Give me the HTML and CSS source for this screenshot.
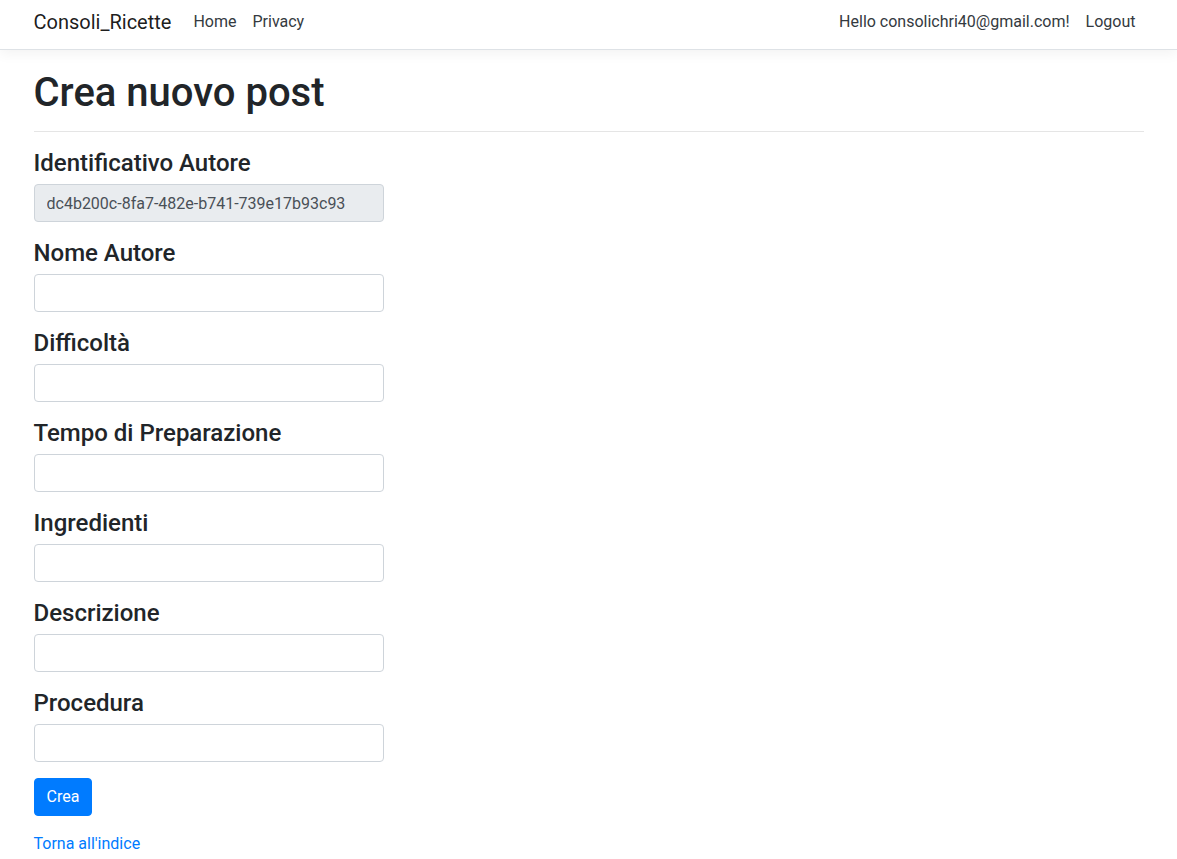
FILE: index.html
```html
<!DOCTYPE html>
<html lang="it">
<head>
<meta charset="utf-8">
<title>Crea nuovo post - Consoli_Ricette</title>
<link rel="stylesheet" href="styles.css">
</head>
<body>
<header class="navbar">
  <div class="container nav-inner">
    <a class="brand" href="#">Consoli_Ricette</a>
    <ul class="nav-left">
      <li><a class="nav-link" href="#">Home</a></li>
      <li><a class="nav-link" href="#">Privacy</a></li>
    </ul>
    <ul class="nav-right">
      <li><a class="nav-link" href="#">Hello consolichri40@gmail.com!</a></li>
      <li><button class="nav-link nav-btn" type="button">Logout</button></li>
    </ul>
  </div>
</header>
<main class="container main">
  <h1 class="title">Crea nuovo post</h1>
  <hr class="rule">
  <div class="row">
    <form class="col">
      <div class="form-group">
        <label class="label">Identificativo Autore</label>
        <input class="form-control" type="text" value="dc4b200c-8fa7-482e-b741-739e17b93c93" readonly>
      </div>
      <div class="form-group">
        <label class="label">Nome Autore</label>
        <input class="form-control" type="text">
      </div>
      <div class="form-group">
        <label class="label">Difficoltà</label>
        <input class="form-control" type="text">
      </div>
      <div class="form-group">
        <label class="label">Tempo di Preparazione</label>
        <input class="form-control" type="text">
      </div>
      <div class="form-group">
        <label class="label">Ingredienti</label>
        <input class="form-control" type="text">
      </div>
      <div class="form-group">
        <label class="label">Descrizione</label>
        <input class="form-control" type="text">
      </div>
      <div class="form-group">
        <label class="label">Procedura</label>
        <input class="form-control" type="text">
      </div>
      <div class="form-group">
        <button class="btn-primary" type="button">Crea</button>
      </div>
    </form>
  </div>
  <div class="back">
    <a class="link" href="#">Torna all'indice</a>
  </div>
</main>
</body>
</html>
```
FILE: styles.css
```css
* { box-sizing: border-box; }
html, body { margin: 0; padding: 0; }
body {
  font-family: Roboto, "Open Sans", "Liberation Sans", sans-serif;
  font-size: 16px;
  line-height: 1.5;
  color: #212529;
  background: #fff;
}
.container {
  width: 1110px;
  margin: 0 auto;
}
.navbar {
  background: #fff;
  border-bottom: 1px solid #dee2e6;
  box-shadow: 0 4px 12px rgba(0,0,0,.05);
  padding: 2px 0 7px;
  margin-bottom: 16px;
}
.nav-inner {
  display: flex;
  align-items: center;
}
.brand {
  font-size: 20px;
  line-height: 30px;
  padding: 5px 0;
  margin-right: 14px;
  color: rgba(0,0,0,.9);
  text-decoration: none;
  white-space: nowrap;
}
.nav-left, .nav-right {
  display: flex;
  list-style: none;
  margin: 0;
  padding: 0;
}
.nav-left { flex: 1; }
.nav-link {
  display: block;
  padding: 8px;
  color: #343a40;
  text-decoration: none;
  font-size: 16px;
  line-height: 24px;
}
.nav-btn {
  border: 0;
  background: transparent;
  font-family: inherit;
  cursor: pointer;
}
.main { padding-bottom: 16px; }
.title {
  font-size: 40px;
  font-weight: 500;
  line-height: 45px;
  padding-top: 4px;
  margin: 0 0 8px;
}
.rule {
  margin: 16px 0;
  border: 0;
  border-top: 1px solid rgba(0,0,0,.1);
}
.row { display: flex; }
.col { width: 350px; }
.form-group { margin-bottom: 16px; }
.label {
  display: block;
  font-size: 24px;
  font-weight: 500;
  line-height: 28px;
  padding-top: 1px;
  margin-bottom: 7px;
}
.form-control {
  display: block;
  width: 100%;
  height: 38px;
  padding: 6px 12px;
  font-family: inherit;
  font-size: 16px;
  line-height: 1.5;
  color: #495057;
  background: #fff;
  border: 1px solid #ced4da;
  border-radius: 4px;
}
.form-control[readonly] { background: #e9ecef; }
.btn-primary {
  font-family: inherit;
  font-size: 16px;
  line-height: 1.5;
  padding: 6px 12px;
  color: #fff;
  background: #007bff;
  border: 1px solid #007bff;
  border-radius: 4px;
  cursor: pointer;
}
.link {
  color: #007bff;
  text-decoration: none;
}
```
